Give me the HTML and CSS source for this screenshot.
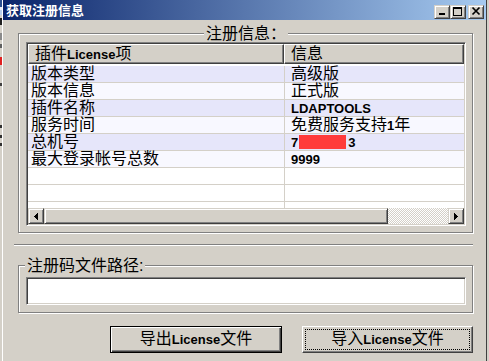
FILE: index.html
```html
<!DOCTYPE html>
<html lang="zh-CN">
<head>
    <meta charset="UTF-8">
    <meta name="viewport" content="width=device-width, initial-scale=1.0">
    <title>获取注册信息</title>
    <link rel="stylesheet" href="styles.css">
</head>
<body>

<div class="screen">
    <div class="desk"></div>

    <div class="window">
        <div class="titlebar">
            <span class="title">获取注册信息</span>
            <div class="controls">
                <span class="ctl"><svg width="14" height="12" viewBox="0 0 14 12"><rect x="4" y="7" width="6" height="2"/></svg></span>
                <span class="ctl"><svg width="14" height="12" viewBox="0 0 14 12"><path d="M2 1h9v9H2z M3 3v6h7V3z" fill-rule="evenodd"/></svg></span>
                <span class="ctl ctl-close"><svg width="14" height="12" viewBox="0 0 14 12"><path d="M3.5 1.5L10.5 8.5M10.5 1.5L3.5 8.5" stroke="#000" stroke-width="1.7" fill="none"/></svg></span>
            </div>
        </div>

        <div class="panel">
            <fieldset class="group group-info">
                <legend>注册信息：</legend>
                <div class="listview">
                    <div class="lv-head">
                        <div class="hcell col-key">插件<span class="en">License</span>项</div>
                        <div class="hcell col-val">信息</div>
                    </div>
                    <div class="lv-body">
                        <div class="lv-row odd">
                            <div class="cell col-key">版本类型</div>
                            <div class="cell col-val">高级版</div>
                        </div>
                        <div class="lv-row even">
                            <div class="cell col-key">版本信息</div>
                            <div class="cell col-val">正式版</div>
                        </div>
                        <div class="lv-row odd">
                            <div class="cell col-key">插件名称</div>
                            <div class="cell col-val"><span class="en">LDAPTOOLS</span></div>
                        </div>
                        <div class="lv-row even">
                            <div class="cell col-key">服务时间</div>
                            <div class="cell col-val">免费服务支持<span class="en">1</span>年</div>
                        </div>
                        <div class="lv-row odd">
                            <div class="cell col-key">总机号</div>
                            <div class="cell col-val"><span class="en">7</span><span class="redact"></span><span class="en">3</span></div>
                        </div>
                        <div class="lv-row even">
                            <div class="cell col-key">最大登录帐号总数</div>
                            <div class="cell col-val"><span class="en">9999</span></div>
                        </div>
                        <div class="lv-row"><div class="cell col-key"></div><div class="cell col-val"></div></div>
                        <div class="lv-row"><div class="cell col-key"></div><div class="cell col-val"></div></div>
                        <div class="lv-row"><div class="cell col-key"></div><div class="cell col-val"></div></div>
                    </div>
                    <div class="hscroll">
                        <span class="sb-btn">
                            <svg width="4" height="7" viewBox="0 0 4 7"><path d="M3 0h1v7H3z M2 1h1v5H2z M1 2h1v3H1z M0 3h1v1H0z"/></svg>
                        </span>
                        <span class="sb-thumb"></span>
                        <span class="sb-track"></span>
                        <span class="sb-btn">
                            <svg width="4" height="7" viewBox="0 0 4 7"><path d="M0 0h1v7H0z M1 1h1v5H1z M2 2h1v3H2z M3 3h1v1H3z"/></svg>
                        </span>
                    </div>
                </div>
            </fieldset>

            <div class="separator"></div>

            <fieldset class="group group-path">
                <legend>注册码文件路径:</legend>
                <input type="text" class="path-input">
            </fieldset>

            <div class="buttons">
                <button class="btn btn-default">导出<span class="en">License</span>文件</button>
                <button class="btn btn-focus">导入<span class="en">License</span>文件</button>
            </div>
        </div>
    </div>
</div>

</body>
</html>
```

FILE: styles.css
```css
body {
    margin: 0;
    width: 489px;
    height: 361px;
    overflow: hidden;
    background-color: #d4d0c8;
    font-family: "Liberation Sans", "Noto Sans CJK SC", sans-serif;
    font-size: 16px;
    color: #000;
}

.screen {
    display: flex;
    height: 361px;
}

/* bit of the desktop peeking out on the left */
.desk {
    width: 2px;
    background: linear-gradient(to bottom,
        #2a4f8f 0 7px, #e8eef8 7px 10px, #b8d0ec 10px 15px, #d4d0c8 15px 18px,
        #202020 18px 25px, #d4d0c8 25px 33px, #8a8a8a 33px 40px, #d4d0c8 40px 44px,
        #606060 44px 48px, #d4d0c8 48px 57px, #e02020 57px 65px, #d4d0c8 65px 83px,
        #404040 83px 86px, #d4d0c8 86px 125px, #303030 125px 128px, #d4d0c8 128px 135px,
        #303030 135px 138px, #d4d0c8 138px 143px, #303030 143px 146px, #d4d0c8 146px);
}

.window {
    flex: 1;
    display: flex;
    flex-direction: column;
    border-left: 1px solid #fff;
    border-right: 1px solid #404040;
    margin-right: 2px;
}

.titlebar {
    height: 20px;
    display: flex;
    justify-content: space-between;
    align-items: flex-start;
    padding: 0 2px 0 3px;
    background: linear-gradient(to right, #0a246a, #a6caf0);
}
.title {
    color: #fff;
    font-weight: bold;
    font-size: 13px;
    line-height: 21px;
}
.controls {
    display: flex;
    padding-top: 5px;
}
.ctl {
    width: 16px;
    height: 14px;
    box-sizing: border-box;
    display: flex;
    background: #d4d0c8;
    border: 1px solid;
    border-color: #d4d0c8 #404040 #404040 #d4d0c8;
    box-shadow: inset 1px 1px #fff, inset -1px -1px #808080;
}
.ctl-close {
    margin-left: 2px;
}

.panel {
    padding: 0 13px 0 11px;
}

.group {
    margin: 0 0 0 4px;
    border: 1px solid #808080;
    box-shadow: inset 1px 1px #fff, 1px 1px #fff;
    min-inline-size: 0;
}
.group legend {
    line-height: 17px;
    height: 17px;
    padding: 0 2px;
    background: #d4d0c8;
}

.group-info {
    margin-top: 5px;
    padding: 0 6px 6px 7px;
}
.group-info legend {
    margin: 0 auto;
}

.listview {
    height: 184px;
    box-sizing: border-box;
    display: flex;
    flex-direction: column;
    border: 1px solid;
    border-color: #808080 #fff #fff #808080;
    box-shadow: inset 1px 1px #404040, inset -1px -1px #d4d0c8;
    padding: 1px;
    background: #fff;
}

.lv-head {
    display: flex;
    height: 20px;
    background: #d4d0c8;
}
.hcell {
    box-sizing: border-box;
    height: 20px;
    border: 1px solid;
    border-color: #fff #404040 #404040 #fff;
    box-shadow: inset -1px -1px #808080;
    padding-left: 6px;
    line-height: 17px;
    white-space: nowrap;
}
.hcell.col-key {
    width: 256px;
}
.hcell.col-val {
    flex: 1;
}

.lv-body {
    height: 144px;
    overflow: hidden;
    padding-top: 2px;
    box-sizing: border-box;
}
.lv-row {
    display: flex;
    height: 17px;
    box-sizing: border-box;
    border-bottom: 1px solid #d4d0c8;
}
.lv-row.odd {
    background: #e6e6fa;
}
.lv-row.even {
    background: #f8f8ff;
}
.cell {
    line-height: 16px;
    white-space: nowrap;
}
.cell.col-key {
    width: 257px;
    box-sizing: border-box;
    padding-left: 3px;
    border-right: 1px solid #d4d0c8;
}
.cell.col-val {
    flex: 1;
    padding-left: 6px;
}

.en {
    font-family: "Liberation Sans", sans-serif;
    font-weight: bold;
    font-size: 13px;
}

.redact {
    display: inline-block;
    width: 47px;
    height: 14px;
    margin: 0 2px 0 1px;
    vertical-align: -2px;
    background: #ff3b3b;
}

.hscroll {
    display: flex;
    height: 16px;
}
.sb-btn,
.sb-thumb {
    box-sizing: border-box;
    background: #d4d0c8;
    border: 1px solid;
    border-color: #d4d0c8 #404040 #404040 #d4d0c8;
    box-shadow: inset 1px 1px #fff, inset -1px -1px #808080;
}
.sb-btn {
    width: 16px;
    display: flex;
    align-items: center;
    justify-content: center;
}
.sb-thumb {
    width: 344px;
}
.sb-track {
    flex: 1;
    background: repeating-conic-gradient(#d4d0c8 0 25%, #fff 0 50%) 0 0 / 2px 2px;
}

.separator {
    margin-top: 11px;
    border-top: 1px solid #808080;
    border-bottom: 1px solid #fff;
}

.group-path {
    margin-top: 11px;
    padding: 3px 6px 7px 7px;
}
.group-path legend {
    margin-left: -1px;
}
.path-input {
    display: block;
    width: 100%;
    height: 28px;
    box-sizing: border-box;
    margin: 0;
    border: 1px solid;
    border-color: #808080 #fff #fff #808080;
    box-shadow: inset 1px 1px #404040, inset -1px -1px #d4d0c8;
    background: #fff;
    outline: none;
}

.buttons {
    display: flex;
    justify-content: flex-end;
    gap: 20px;
    margin-top: 13px;
}
.btn {
    height: 27px;
    padding: 0;
    font-family: inherit;
    font-size: 16px;
    color: #000;
    background: #d4d0c8;
    line-height: 20px;
}
.btn-default {
    width: 172px;
    border: 1px solid #000;
    box-shadow: inset 1px 1px #fff, inset -1px -1px #404040, inset -2px -2px #808080;
}
.btn-focus {
    width: 171px;
    border: 1px solid;
    border-color: #fff #404040 #404040 #fff;
    box-shadow: inset -1px -1px #808080;
    outline: 1px dotted #000;
    outline-offset: -4px;
}
```
